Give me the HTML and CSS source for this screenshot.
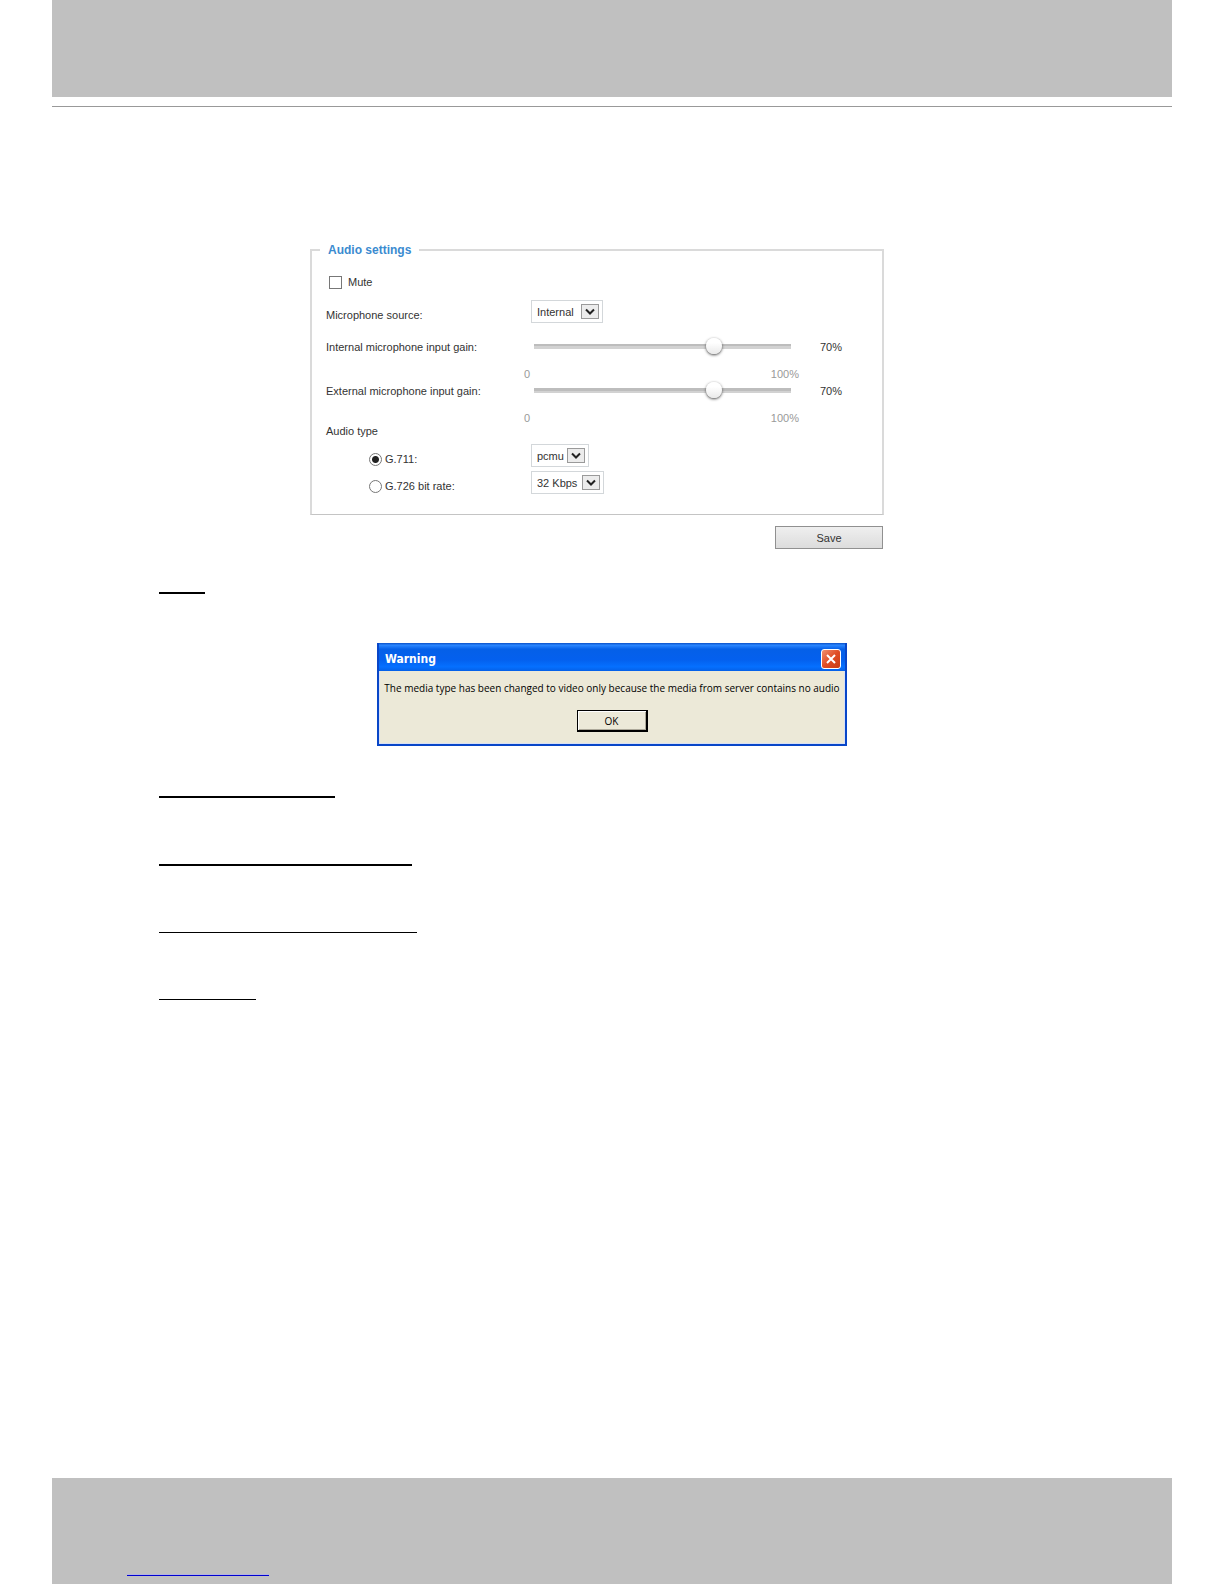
FILE: index.html
```html
<!DOCTYPE html>
<html lang="en">
<head>
<meta charset="utf-8">
<title>Audio settings</title>
<link rel="stylesheet" href="styles.css">
</head>
<body>
<div class="page">
  <header class="band band-top"></header>
  <main class="content">
    <form class="settings">
      <fieldset class="panel">
        <legend class="panel-title">Audio settings</legend>
        <label class="mute"><input class="check" type="checkbox">Mute</label>
        <div class="row">
          <label for="source">Microphone source:</label>
          <span class="pick"><select id="source" class="pick-internal"><option>Internal</option><option>External</option></select><svg class="arrow" viewBox="0 0 18 15"><rect x=".5" y=".5" width="17" height="14"/><path d="M5 5.500 9 9.500 13 5.500"/></svg></span>
        </div>
        <div class="gain">
          <label for="internal">Internal microphone input gain:</label>
          <input id="internal" class="slider" type="range" min="0" max="100" value="70">
          <output class="value" for="internal">70%</output>
          <div class="scale"><span>0</span><span>100%</span></div>
        </div>
        <div class="gain">
          <label for="external">External microphone input gain:</label>
          <input id="external" class="slider" type="range" min="0" max="100" value="70">
          <output class="value" for="external">70%</output>
          <div class="scale"><span>0</span><span>100%</span></div>
        </div>
        <div class="type">Audio type</div>
        <div class="row codec">
          <label class="option"><input class="radio" type="radio" name="codec" checked>G.711:</label>
          <span class="pick"><select class="pick-pcmu" aria-label="G.711 mode"><option>pcmu</option><option>pcma</option></select><svg class="arrow" viewBox="0 0 18 15"><rect x=".5" y=".5" width="17" height="14"/><path d="M5 5.500 9 9.500 13 5.500"/></svg></span>
        </div>
        <div class="row codec">
          <label class="option"><input class="radio" type="radio" name="codec">G.726 bit rate:</label>
          <span class="pick"><select class="pick-rate" aria-label="G.726 bit rate"><option>32 Kbps</option><option>40 Kbps</option></select><svg class="arrow" viewBox="0 0 18 15"><rect x=".5" y=".5" width="17" height="14"/><path d="M5 5.500 9 9.500 13 5.500"/></svg></span>
        </div>
      </fieldset>
      <button class="save" type="button">Save</button>
    </form>
    <hr class="rule rule-mute">
    <section class="dialog" role="alertdialog" aria-labelledby="warn-title">
      <div class="titlebar">
        <h2 class="dialog-title" id="warn-title">Warning</h2>
        <button class="close" type="button" aria-label="Close"><svg viewBox="0 0 18 18"><path d="M5 5 13 13M13 5 5 13"/></svg></button>
      </div>
      <div class="dialog-body">
        <p class="message">The media type has been changed to video only because the media from server contains no audio</p>
        <button class="ok" type="button">OK</button>
      </div>
    </section>
    <div class="rules">
      <hr class="rule rule-source">
      <hr class="rule rule-internal">
      <hr class="rule thin rule-external">
      <hr class="rule thin rule-type">
    </div>
  </main>
  <footer class="band band-bottom"><hr class="rule rule-link"></footer>
</div>
</body>
</html>
```
FILE: styles.css
```css
* { box-sizing: border-box; }
body {
  margin: 0;
  background: #fff;
  color: #333;
  font: 11px/14px "Liberation Sans", Arial, sans-serif;
}
input, select, button { font: inherit; color: inherit; margin: 0; }
.page {
  display: flex;
  flex-direction: column;
  min-height: 100vh;
  padding: 0 52px;
}
.band { background: #c0c0c0; }
.band-top { height: 97px; }
.content {
  flex: 1;
  margin-top: 9px;
  padding: 135px 107px 0;
  border-top: 1px solid #999;
}

/* Settings form */
.settings {
  display: flex;
  flex-direction: column;
  max-width: 574px;
  margin: 0 auto;
  position: relative;
  right: 15px;
}
.panel {
  min-width: 0;
  margin: 0;
  padding: 17px 14px 20px;
  border: 2px solid #dadada;
  border-bottom: 1px solid #c4c4c4;
}
.panel-title {
  margin-left: -6px;
  padding: 0 8px;
  color: #3b8bd0;
  font-size: 12px;
  font-weight: bold;
  line-height: 16px;
}
.mute { display: flex; align-items: center; gap: 6px; margin-left: 3px; }
.check, .radio {
  appearance: none;
  width: 13px;
  height: 13px;
  border: 1px solid #777;
  background: #fff;
}
.radio { border-radius: 50%; }
.radio:checked { background: radial-gradient(circle, #222 3px, #fff 4px); }
.row {
  display: grid;
  grid-template-columns: 205px auto;
  justify-content: start;
  align-items: end;
  margin-top: 11px;
  line-height: 16px;
}
.codec { margin-top: 4px; }
.option { display: flex; align-items: center; gap: 3px; padding-left: 43px; }
.pick { display: flex; position: relative; }
.pick select {
  appearance: none;
  height: 23px;
  padding: 0 0 0 5px;
  border: 1px solid #d3d7da;
  border-radius: 0;
  background: #fff;
}
.pick-internal { width: 72px; }
.pick-pcmu { width: 58px; }
.pick-rate { width: 73px; }
.arrow {
  position: absolute;
  top: 4px;
  right: 4px;
  width: 18px;
  height: 15px;
  pointer-events: none;
}
.arrow rect { fill: #ececec; stroke: #9a9a9a; }
.arrow path { fill: none; stroke: #222; stroke-width: 2; }
.gain {
  display: grid;
  grid-template-columns: 198px 275px auto;
  grid-template-rows: 14px 14px;
  row-gap: 13px;
  align-items: center;
  justify-content: start;
  margin-top: 3px;
}
.row + .gain { margin-top: 17px; }
.slider {
  appearance: none;
  width: 273px;
  height: 20px;
  margin: 0 0 2px 2px;
  background: linear-gradient(#bdbdbd 50%, #d2d2d2 50%) center / calc(100% - 16px) 5px no-repeat;
}
.slider::-webkit-slider-thumb {
  appearance: none;
  width: 16px;
  height: 16px;
  border-radius: 50%;
  background: linear-gradient(#fff 30%, #e9e9e9);
  box-shadow: 0 1px 3px #444;
}
.value { margin-left: 21px; }
.scale {
  grid-column: 2;
  display: flex;
  justify-content: space-between;
  color: #999;
}
.type { margin-bottom: 7px; line-height: 12px; }
.save {
  align-self: flex-end;
  width: 108px;
  height: 23px;
  margin: 11px 1px 0 0;
  padding: 0;
  border: 1px solid #909090;
  border-radius: 0;
  background: linear-gradient(#efefef, #dcdcdc);
}

/* Underline marks */
.rule { height: 2px; margin: 0; border: 0; background: #000; }
.thin { height: 1px; }
.rule-mute { width: 46px; margin-top: 43px; }
.rules { display: flex; flex-direction: column; gap: 66px; margin-top: 50px; }
.rule-source { width: 176px; }
.rule-internal { width: 253px; }
.rule-external { width: 258px; }
.rule-type { width: 97px; }

/* Warning dialog */
.dialog {
  max-width: 470px;
  margin: 49px auto 0;
  border: 2px solid #0846c8;
  border-top: 0;
  background: #0846c8;
  color: #000;
}
.titlebar {
  display: flex;
  align-items: center;
  justify-content: space-between;
  height: 28px;
  padding: 4px 4px 0 6px;
  background: linear-gradient(#0a50c8, #2a86ff 8%, #0560e8 22%, #0460ee 60%, #0570ff 85%, #0560e8);
}
.dialog-title {
  margin: 0;
  color: #fff;
  font: bold 12px/16px "DejaVu Sans Condensed", "DejaVu Sans", sans-serif;
}
.close {
  width: 20px;
  height: 20px;
  padding: 0;
  border: 1px solid #fff;
  border-radius: 3px;
  background: linear-gradient(135deg, #f09070, #e04c24 50%, #c83c14);
}
.close svg { display: block; width: 18px; height: 18px; }
.close path { stroke: #fff; stroke-width: 2; }
.dialog-body {
  display: flex;
  flex-direction: column;
  align-items: center;
  padding: 9px 0 11px;
  border: 1px solid #d8e0f4;
  border-top: 0;
  background: #ece9d8;
  font: 10px/16px "Open Sans", sans-serif;
}
.message { margin: 0; }
.ok {
  width: 71px;
  height: 22px;
  margin-top: 14px;
  padding: 0;
  border: 1px solid #000;
  border-right-width: 2px;
  border-bottom-width: 2px;
  background: #ece9d8;
  box-shadow: inset 1px 1px #fff, inset -1px -1px #aca899;
}

/* Footer */
.band-bottom { height: 106px; padding: 96px 75px 0; }
.rule-link { width: 142px; border-top: 1px solid #b4b4e0; background: #0000d0; }
```
